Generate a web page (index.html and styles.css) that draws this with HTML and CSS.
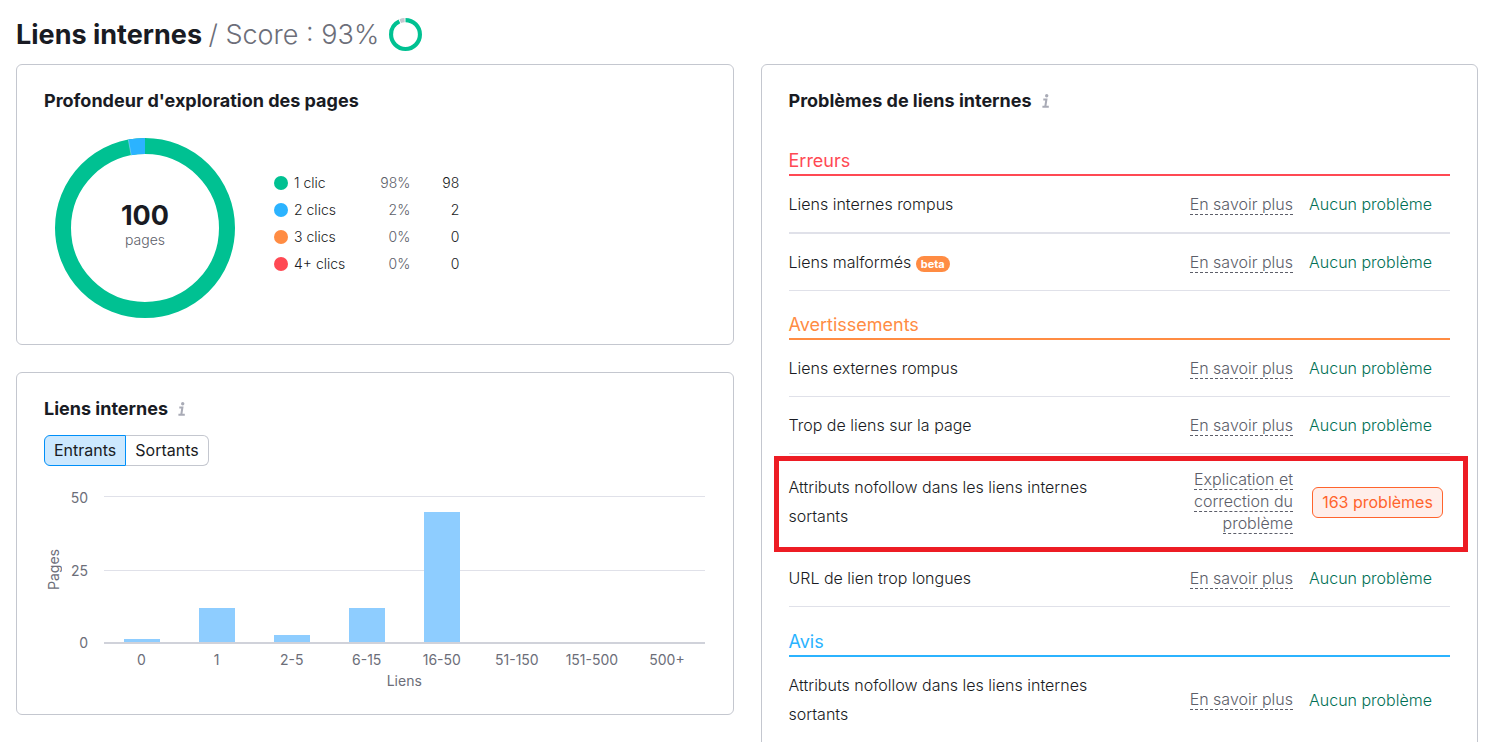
FILE: index.html
```html
<!DOCTYPE html>
<html lang="fr">
<head>
<meta charset="utf-8">
<meta name="viewport" content="width=device-width, initial-scale=1">
<title>Liens internes</title>
<link rel="stylesheet" href="styles.css">
</head>
<body>
<header class="page-header">
  <h1 class="page-title">Liens internes <span class="score">/ Score : 93%</span></h1>
  <svg class="score-ring" viewBox="0 0 32 32" aria-hidden="true">
    <g transform="rotate(-90 16 16)" fill="none" stroke-width="4">
      <circle cx="16" cy="16" r="14" pathLength="100" stroke="#00c192" stroke-dasharray="93 7"/>
      <circle cx="16" cy="16" r="14" pathLength="100" stroke="#c4c7cf" stroke-dasharray="0 94 5 1"/>
    </g>
  </svg>
</header>
<main class="board">
  <div class="column">
    <section class="card">
      <h2 class="card-title">Profondeur d'exploration des pages</h2>
      <div class="depth">
        <div class="donut">
          <svg class="donut-ring" viewBox="0 0 180 180" aria-hidden="true">
            <g transform="rotate(-90 90 90)" fill="none" stroke-width="16">
              <circle cx="90" cy="90" r="82" stroke="#00c192"/>
              <circle cx="90" cy="90" r="82" pathLength="100" stroke="#2bb3ff" stroke-dasharray="0 97 3 0"/>
            </g>
            <path d="M73.300 1.500L76.200 17.500" stroke="#fff" stroke-width=".5" opacity=".6"/>
          </svg>
          <div class="donut-label"><strong class="donut-total">100</strong><span class="donut-unit">pages</span></div>
        </div>
        <table class="legend">
          <tr><th scope="row"><span class="dot green"></span>1 clic</th><td class="share">98%</td><td>98</td></tr>
          <tr><th scope="row"><span class="dot blue"></span>2 clics</th><td class="share">2%</td><td>2</td></tr>
          <tr><th scope="row"><span class="dot orange"></span>3 clics</th><td class="share">0%</td><td>0</td></tr>
          <tr><th scope="row"><span class="dot red"></span>4+ clics</th><td class="share">0%</td><td>0</td></tr>
        </table>
      </div>
    </section>
    <section class="card">
      <h2 class="card-title">Liens internes
        <svg class="info" viewBox="0 0 8 14" aria-hidden="true"><circle cx="4.700" cy="1.700" r="1.700"/><path d="M1.300 5.500H4.400L3.300 12.500M.4 12.700H6.800" fill="none" stroke="currentColor" stroke-width="2"/></svg>
      </h2>
      <div class="toggle">
        <button type="button" class="toggle-item selected" aria-pressed="true">Entrants</button>
        <button type="button" class="toggle-item" aria-pressed="false">Sortants</button>
      </div>
      <div class="chart">
        <div class="y-title">Pages</div>
        <div class="y-axis"><span>50</span><span>25</span><span>0</span></div>
        <div class="plot">
          <div class="bar" style="height:2%"></div>
          <div class="bar" style="height:23%"></div>
          <div class="bar" style="height:5%"></div>
          <div class="bar" style="height:23%"></div>
          <div class="bar" style="height:89%"></div>
        </div>
        <div class="x-axis"><span>0</span><span>1</span><span>2-5</span><span>6-15</span><span>16-50</span><span>51-150</span><span>151-500</span><span>500+</span></div>
        <div class="x-title">Liens</div>
      </div>
    </section>
  </div>
  <section class="card issues">
    <h2 class="card-title">Problèmes de liens internes
      <svg class="info" viewBox="0 0 8 14" aria-hidden="true"><circle cx="4.700" cy="1.700" r="1.700"/><path d="M1.300 5.500H4.400L3.300 12.500M.4 12.700H6.800" fill="none" stroke="currentColor" stroke-width="2"/></svg>
    </h2>
    <h3 class="group-title errors">Erreurs</h3>
    <ul class="group">
      <li class="issue"><span class="name">Liens internes rompus</span><span class="help"><a class="more" href="#">En savoir plus</a></span><span class="ok">Aucun problème</span></li>
      <li class="issue"><span class="name">Liens malformés <span class="beta">beta</span></span><span class="help"><a class="more" href="#">En savoir plus</a></span><span class="ok">Aucun problème</span></li>
    </ul>
    <h3 class="group-title warnings">Avertissements</h3>
    <ul class="group">
      <li class="issue"><span class="name">Liens externes rompus</span><span class="help"><a class="more" href="#">En savoir plus</a></span><span class="ok">Aucun problème</span></li>
      <li class="issue"><span class="name">Trop de liens sur la page</span><span class="help"><a class="more" href="#">En savoir plus</a></span><span class="ok">Aucun problème</span></li>
      <li class="issue highlighted"><span class="name">Attributs nofollow dans les liens internes sortants</span><span class="help"><a class="more" href="#">Explication et correction du problème</a></span><button type="button" class="count">163 problèmes</button></li>
      <li class="issue"><span class="name">URL de lien trop longues</span><span class="help"><a class="more" href="#">En savoir plus</a></span><span class="ok">Aucun problème</span></li>
    </ul>
    <h3 class="group-title notices">Avis</h3>
    <ul class="group">
      <li class="issue"><span class="name">Attributs nofollow dans les liens internes sortants</span><span class="help"><a class="more" href="#">En savoir plus</a></span><span class="ok">Aucun problème</span></li>
    </ul>
  </section>
</main>
</body>
</html>
```
FILE: styles.css
```css
* { box-sizing: border-box; }
html { overflow: hidden; }
body {
  margin: 0;
  padding: 8px 24px 0 16px;
  background: #fff;
  color: #191b23;
  font: 400 16px/22px Inter, sans-serif;
}
h1, h2, h3, ul { margin: 0; padding: 0; }
button { font: inherit; color: inherit; cursor: pointer; }

.page-header { display: flex; align-items: center; gap: 10px; height: 56px; padding-bottom: 3px; }
.page-title { font-size: 27px; line-height: 36px; font-weight: 700; }
.score { color: #6c6e79; font-weight: 350; }
.score-ring { width: 33px; height: 33px; }

.board { display: grid; grid-template-columns: 1fr 1fr; gap: 27px; }
.column { display: flex; flex-direction: column; gap: 27px; }
.card { padding: 24px 27px; border: 1px solid #c4c7cf; border-radius: 6px; }
.card-title { font-size: 18px; line-height: 24px; font-weight: 700; }
.info { width: 8px; height: 14px; margin-left: 6px; vertical-align: -1px; color: #a9abb6; fill: currentColor; }

.depth { display: flex; align-items: center; gap: 39px; padding: 25px 11px 2px; }
.donut { display: grid; width: 180px; height: 180px; }
.donut-ring, .donut-label { grid-area: 1 / 1; }
.donut-label { display: flex; flex-direction: column; align-items: center; justify-content: center; padding-bottom: 5px; }
.donut-total { font-size: 27px; line-height: 28px; font-weight: 700; }
.donut-unit { font-size: 14px; line-height: 20px; font-weight: 300; color: #5c5e69; }
.legend { border-collapse: collapse; font-size: 14px; line-height: 27px; margin-bottom: 11px; }
.legend th, .legend td { padding: 0; font-weight: 300; text-align: right; }
.legend th { text-align: left; }
.legend td { width: 49px; }
.legend .share { width: 65px; color: #5c5e69; }
.dot { display: inline-block; width: 14px; height: 14px; margin-right: 6px; border-radius: 50%; vertical-align: -2px; }
.green { background: #00c192; }
.blue { background: #2bb3ff; }
.orange { background: #ff8c43; }
.red { background: #ff4953; }

.toggle { display: flex; margin-top: 14px; }
.toggle-item { height: 31px; padding: 0 9px 2px; border: 1px solid #c4c7cf; border-left: 0; border-radius: 0 6px 6px 0; background: #fff; }
.toggle-item.selected { border: 1px solid #008ff8; border-radius: 6px 0 0 6px; background: #cce8fe; }

.chart {
  display: grid;
  grid-template-columns: 24px 20px 1fr;
  grid-template-rows: 148px 27px 19px;
  padding: 30px 1px 0 0;
  font-size: 14px;
  line-height: 20px;
  color: #6c6e79;
}
.y-title { writing-mode: vertical-rl; transform: rotate(180deg); text-align: center; }
.y-axis { display: flex; flex-direction: column; justify-content: space-between; margin: -8px 0 -9px; text-align: right; }
.plot {
  display: grid;
  grid-template-columns: repeat(8, 1fr);
  align-items: end;
  justify-items: center;
  margin-left: 16px;
  border-bottom: 2px solid #d0d2da;
  background: linear-gradient(#e0e1e9 0 0) 0 0 / 100% 1px no-repeat, linear-gradient(#e0e1e9 0 0) 0 51% / 100% 1px no-repeat;
}
.bar { width: 48%; background: #8ecdff; }
.x-axis { grid-column: 3; display: grid; grid-template-columns: repeat(8, 1fr); margin-left: 16px; padding-top: 6px; text-align: center; }
.x-title { grid-column: 3; margin-left: 16px; text-align: center; }

.group-title { padding-bottom: 1px; border-bottom: 2px solid; font-size: 18px; line-height: 24px; font-weight: 400; margin-top: 22px; }
.card-title + .group-title { margin-top: 36px; }
.errors { color: #ff4953; }
.warnings { color: #ff8c43; }
.group-title.notices { margin-top: 23px; color: #2bb3ff; }
.group { list-style: none; }
.issue {
  position: relative;
  display: grid;
  grid-template-columns: 1fr 128px 141px;
  column-gap: 16px;
  align-items: center;
  padding: 14px 0 13px;
  border-bottom: 1px solid #e0e1e9;
  font-weight: 300;
}
.errors + .group .issue:first-child { border-bottom-width: 2px; }
.name, .ok { line-height: 29px; }
.help { padding-bottom: 2px; text-align: right; }
.more { color: #5c5e69; text-decoration: none; border-bottom: 1px dashed; }
.ok { color: #007055; }
.beta { display: inline-block; padding: 0 5px; border-radius: 8px; background: #ff8c43; color: #fff; font-size: 11px; line-height: 16px; font-weight: 700; }
.count { justify-self: center; height: 31px; margin-right: 4px; padding: 0 9px; border: 1px solid #ff642d; border-radius: 6px; background: #ffeeea; color: #ff642d; font-weight: 400; }
.highlighted::after { content: ""; position: absolute; inset: 2px -18px -3px -15px; border: 5px solid #ed1c24; pointer-events: none; }
```
